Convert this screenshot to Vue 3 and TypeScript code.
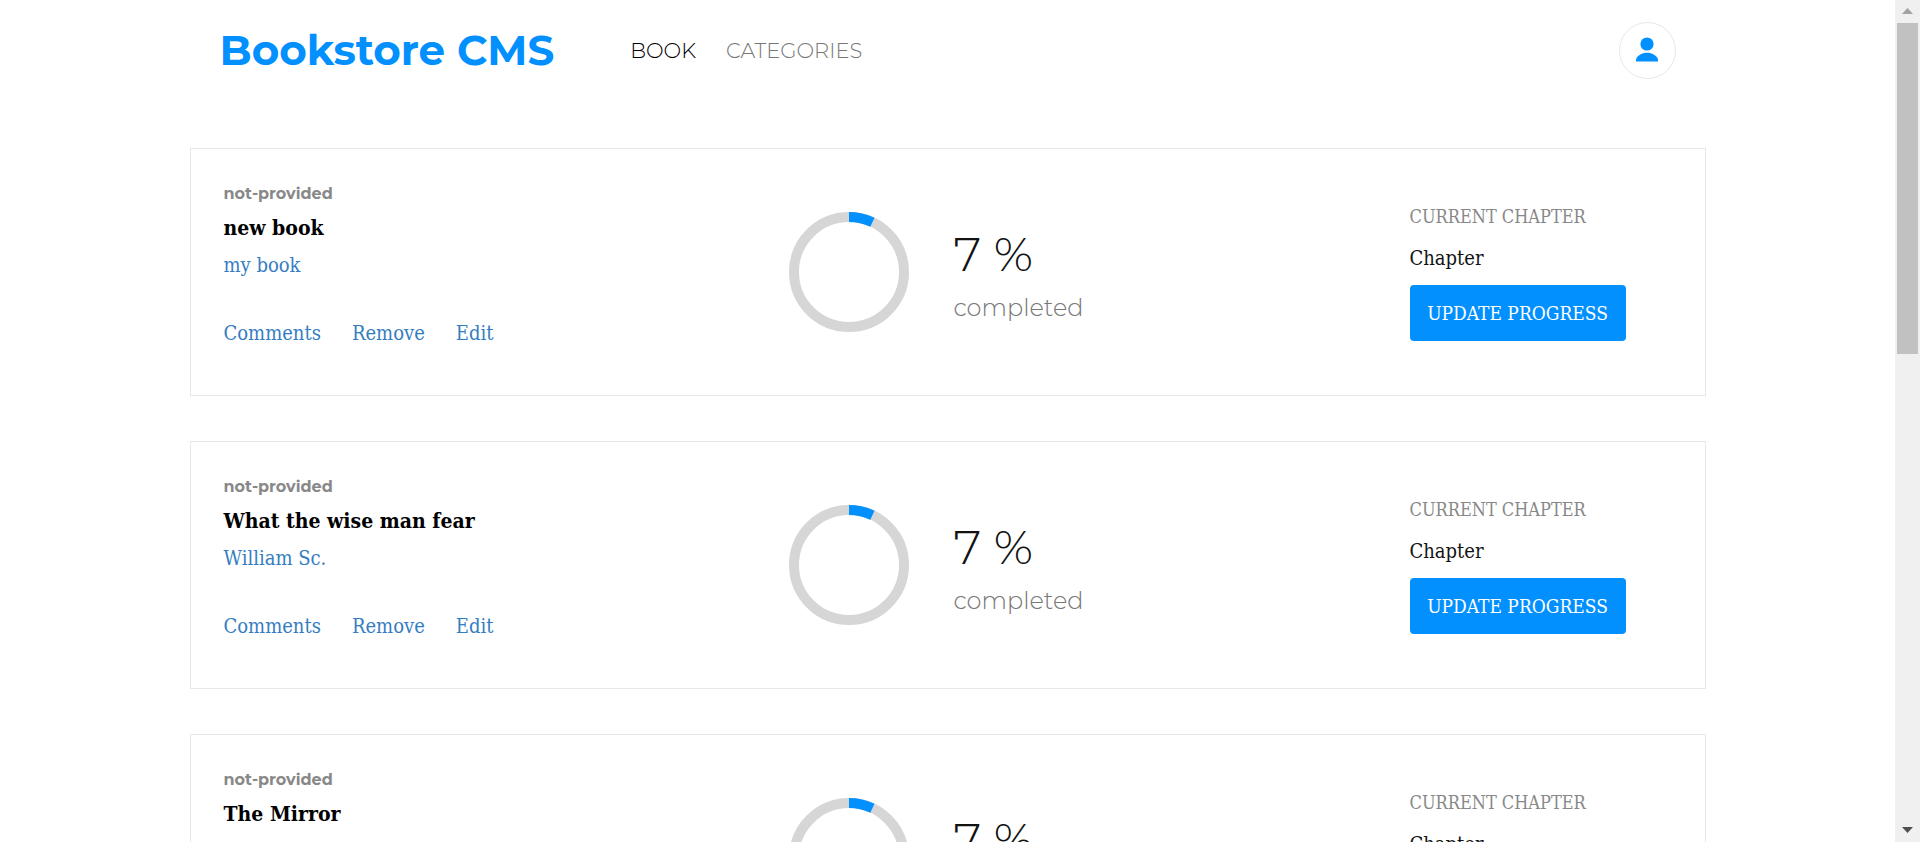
<script setup lang="ts">
interface Book {
  id: number
  category: string
  title: string
  author: string
  progress: number
  chapter: string
}

const books: Book[] = [
  { id: 1, category: 'not-provided', title: 'new book', author: 'my book', progress: 7, chapter: 'Chapter' },
  { id: 2, category: 'not-provided', title: 'What the wise man fear', author: 'William Sc.', progress: 7, chapter: 'Chapter' },
  { id: 3, category: 'not-provided', title: 'The Mirror', author: '', progress: 7, chapter: 'Chapter' },
]
</script>

<template>
  <div class="app">
    <div class="page">
      <header class="header">
        <h1 class="brand">Bookstore CMS</h1>
        <nav class="nav">
          <a class="nav-link active" href="#books">BOOK</a>
          <a class="nav-link" href="#categories">CATEGORIES</a>
        </nav>
        <button class="avatar" type="button" aria-label="User profile">
          <svg width="22" height="28" viewBox="0 0 22 28" fill="currentColor" aria-hidden="true">
            <circle cx="11" cy="7" r="6.600" />
            <path d="M0 24.500v-2.200C1.600 18.100 6 15.700 11 15.700s9.400 2.400 11 6.600v2.200z" />
          </svg>
        </button>
      </header>

      <main class="books">
        <article v-for="book in books" :key="book.id" class="card">
          <section class="info">
            <p class="category">{{ book.category }}</p>
            <h2 class="title">{{ book.title }}</h2>
            <a class="author" href="#author">{{ book.author }}</a>
            <div class="actions">
              <button class="action" type="button">Comments</button>
              <button class="action" type="button">Remove</button>
              <button class="action" type="button">Edit</button>
            </div>
          </section>

          <section class="progress">
            <svg class="ring" viewBox="0 0 120 120" aria-hidden="true">
              <circle class="ring-track" cx="60" cy="60" r="55" />
              <circle
                class="ring-value"
                cx="60"
                cy="60"
                r="55"
                pathLength="100"
                :stroke-dasharray="`${book.progress} 100`"
                transform="rotate(-90 60 60)"
              />
            </svg>
            <div>
              <p class="percent">{{ book.progress }} %</p>
              <p class="completed">completed</p>
            </div>
          </section>

          <section class="current">
            <p class="current-label">CURRENT CHAPTER</p>
            <p class="chapter">{{ book.chapter }}</p>
            <button class="update" type="button">UPDATE PROGRESS</button>
          </section>
        </article>
      </main>
    </div>

    <div class="scrollbar" aria-hidden="true">
      <svg class="arrow up" viewBox="0 0 11 6"><path d="M0 6 5.500 0 11 6z" /></svg>
      <div class="track"><div class="thumb"></div></div>
      <svg class="arrow down" viewBox="0 0 11 6"><path d="M0 0h11L5.500 6z" /></svg>
    </div>
  </div>
</template>

<style>
body {
  margin: 0;
  background: #fff;
}
</style>

<style scoped>
.app {
  display: flex;
  height: 100vh;
  overflow: hidden;
  font-family: Montserrat, Inter, sans-serif;
  color: #121212;
}

.page {
  flex: 1;
  overflow-y: auto;
  scrollbar-width: none;
}

h1,
h2,
p {
  margin: 0;
}

button {
  padding: 0;
  border: 0;
  background: none;
  font: inherit;
  cursor: pointer;
}

a {
  text-decoration: none;
}

.header {
  display: flex;
  align-items: center;
  width: 80%;
  height: 101px;
  margin: 0 auto 47px;
  padding: 0 30px;
  box-sizing: border-box;
}

.brand {
  padding-bottom: 2px;
  font-size: 42px;
  font-weight: 700;
  line-height: 56px;
  color: #0290ff;
  white-space: nowrap;
}

.nav {
  display: flex;
  gap: 30px;
  margin-left: 76px;
}

.nav-link {
  font-size: 21px;
  font-weight: 300;
  line-height: 28px;
  color: #777;
}

.nav-link.active {
  color: #000;
}

.avatar {
  display: flex;
  align-items: center;
  justify-content: center;
  width: 57px;
  height: 57px;
  margin-left: auto;
  box-sizing: border-box;
  border: 1px solid #e8e8e8;
  border-radius: 50%;
  color: #0290ff;
}

.books {
  display: flex;
  flex-direction: column;
  gap: 45px;
  width: 80%;
  margin: 0 auto;
  padding-bottom: 45px;
}

.card {
  display: grid;
  grid-template-columns: 565fr 621fr 295fr;
  padding: 31px 0 46px 33px;
  border: 1px solid #e8e8e8;
}

.info,
.current {
  font-family: "Roboto Slab", "DejaVu Serif Condensed", "DejaVu Serif", serif;
}

.info {
  display: flex;
  flex-direction: column;
  align-items: flex-start;
}

.category {
  font-family: Montserrat, Inter, sans-serif;
  font-size: 16px;
  font-weight: 700;
  line-height: 28px;
  color: #888;
}

.title {
  font-size: 21px;
  font-weight: 700;
  line-height: 40px;
  color: #000;
}

.author {
  min-height: 34px;
  font-size: 20px;
  line-height: 34px;
  color: #347dc1;
}

.actions {
  display: flex;
  gap: 31px;
  margin-top: 35px;
}

.action {
  font-size: 20px;
  line-height: 32px;
  color: #347dc1;
}

.progress {
  display: flex;
  align-items: flex-start;
  gap: 45px;
  padding-top: 32px;
}

.ring {
  width: 120px;
  height: 120px;
}

.ring-track,
.ring-value {
  fill: none;
  stroke-width: 10px;
}

.ring-track {
  stroke: #d6d6d6;
}

.ring-value {
  stroke: #0290ff;
}

.percent {
  margin-top: 14px;
  font-size: 48px;
  font-weight: 300;
  line-height: 56px;
}

.completed {
  margin-top: 10px;
  font-size: 24px;
  font-weight: 300;
  line-height: 32px;
  color: #777;
}

.current {
  display: flex;
  flex-direction: column;
  align-items: flex-start;
  padding-top: 21px;
}

.current-label {
  font-size: 18px;
  font-weight: 300;
  line-height: 32px;
  color: #888;
}

.chapter {
  margin-top: 8px;
  font-size: 20px;
  font-weight: 300;
  line-height: 34px;
}

.update {
  width: 216px;
  height: 56px;
  margin-top: 10px;
  border-radius: 4px;
  background: #0290ff;
  font-size: 19px;
  font-weight: 300;
  color: #fff;
  white-space: nowrap;
}

.scrollbar {
  display: flex;
  flex-direction: column;
  align-items: center;
  width: 25px;
  background: #f0f0f0;
}

.arrow {
  width: 11px;
  height: 6px;
}

.up {
  margin: 8px 0 9px;
  fill: #a3a3a3;
}

.down {
  margin: 9px 0;
  fill: #505050;
}

.track {
  display: grid;
  flex: 1;
  grid-template-rows: 331fr 464fr;
  width: 21px;
}

.thumb {
  background: #c1c1c1;
}
</style>
